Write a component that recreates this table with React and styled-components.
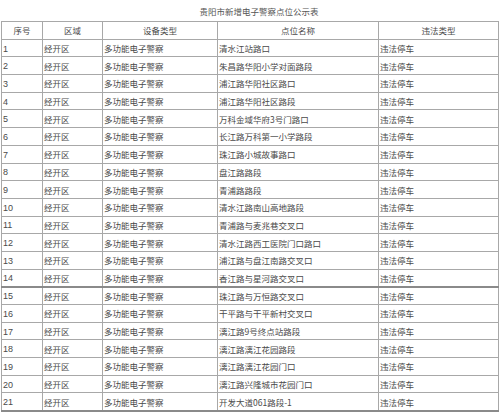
import React from "react";
import styled, { createGlobalStyle } from "styled-components";

const Global = createGlobalStyle`
  html, body { margin: 0; padding: 0; background: #fff; }
  body { font-family: "Noto Sans CJK SC", "Liberation Sans", sans-serif; color: #4a4a4a; }
`;

const Page = styled.div`
  width: 499px;
  height: 414px;
  padding: 4px 0 0 1px;
  box-sizing: border-box;
  overflow: hidden;
`;

const Title = styled.div`
  height: 17px;
  line-height: 14px;
  font-size: 8.5px;
  text-align: center;
  padding-left: 18px;
  color: #555;
`;

const Table = styled.table`
  border-collapse: collapse;
  table-layout: fixed;
  width: 497px;
  font-size: 8.5px;
  color: #4a4a4a;
`;

const Tr = styled.tr`
  height: 17.7px;
  & > td, & > th {
    border-bottom: ${(p) => (p.$thick ? "2px solid #8a8a8a" : "1px solid #a8a8a8")};
  }
`;

const Th = styled.th`
  font-weight: normal;
  text-align: center;
  border: 1px solid #a8a8a8;
  padding: 0;
  line-height: 12px;
  height: 16.7px;
  box-sizing: border-box;
`;

const Td = styled.td`
  border: 1px solid #a8a8a8;
  padding: 0 0 0 ${(p) => p.$pad || 1}px;
  text-align: left;
  white-space: nowrap;
  overflow: hidden;
  line-height: 12px;
  height: 16.7px;
  box-sizing: border-box;
`;

const Num = styled.span`
  font-family: "Liberation Sans", "DejaVu Sans", sans-serif;
  font-size: 9px;
  line-height: 12px;
`;

const places = [
  "清水江站路口",
  "朱昌路华阳小学对面路段",
  "浦江路华阳社区路口",
  "浦江路华阳社区路段",
  "万科金域华府3号门路口",
  "长江路万科第一小学路段",
  "珠江路小城故事路口",
  "盘江路路段",
  "青浦路路段",
  "清水江路南山高地路段",
  "青浦路与麦兆巷交叉口",
  "清水江路西工医院门口路口",
  "浦江路与盘江南路交叉口",
  "香江路与星河路交叉口",
  "珠江路与万恒路交叉口",
  "干平路与干平新村交叉口",
  "漓江路9号终点站路段",
  "漓江路漓江花园路段",
  "漓江路漓江花园门口",
  "漓江路兴隆城市花园门口",
  "开发大道061路段-1",
];

export default function App() {
  return (
    <Page>
      <Global />
      <Title>贵阳市新增电子警察点位公示表</Title>
      <Table>
        <colgroup>
          <col style={{ width: 41 }} />
          <col style={{ width: 60 }} />
          <col style={{ width: 115 }} />
          <col style={{ width: 161 }} />
          <col style={{ width: 120 }} />
        </colgroup>
        <thead>
          <Tr>
            <Th>序号</Th>
            <Th>区域</Th>
            <Th>设备类型</Th>
            <Th>点位名称</Th>
            <Th>违法类型</Th>
          </Tr>
        </thead>
        <tbody>
          {places.map((p, i) => (
            <Tr key={i} $thick={i === 13 || i === 20}>
              <Td $pad={1}><Num>{i + 1}</Num></Td>
              <Td $pad={0}>经开区</Td>
              <Td $pad={1}>多功能电子警察</Td>
              <Td $pad={1}>{p}</Td>
              <Td $pad={0}>违法停车</Td>
            </Tr>
          ))}
        </tbody>
      </Table>
    </Page>
  );
}
